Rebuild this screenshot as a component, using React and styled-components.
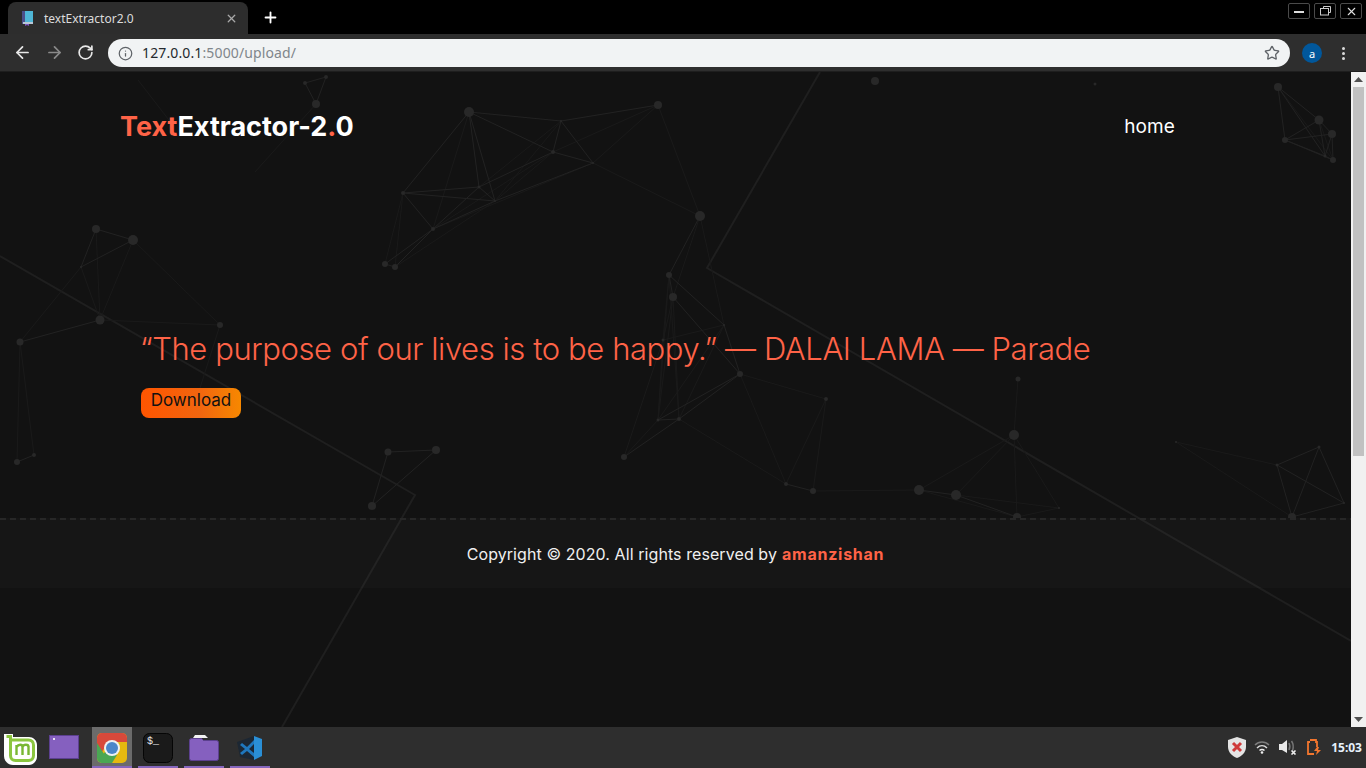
import React from 'react'
import styled, { createGlobalStyle } from 'styled-components'
import { ArrowLeft, ArrowRight, RotateCw, Info, Star, X, Plus } from 'lucide-react'

const GlobalStyle = createGlobalStyle`
  html, body { margin: 0; padding: 0; background: #000; overflow: hidden; }
  * { box-sizing: border-box; }
`

const Screen = styled.div`
  width: 1366px;
  height: 768px;
  display: flex;
  flex-direction: column;
  overflow: hidden;
  font-family: Inter, "Liberation Sans", sans-serif;
`

/* browser chrome */
const TabStrip = styled.div`
  height: 34px;
  flex: none;
  background: #000;
  display: flex;
  align-items: flex-end;
  padding-left: 8px;
`
const Tab = styled.div`
  width: 240px;
  height: 32px;
  background: #2d2d2d;
  border-radius: 8px 8px 0 0;
  display: flex;
  align-items: center;
  padding: 0 10px 0 14px;
  gap: 10px;
`
const TabTitle = styled.span`
  flex: 1;
  font-family: "Noto Sans", "Open Sans", sans-serif;
  font-size: 12px;
  color: #dcdcdc;
`
const NewTab = styled.div`
  margin: 0 0 5px 14px;
  height: 24px;
  display: flex;
  align-items: center;
  color: #fff;
`
const WindowButtons = styled.div`
  margin-left: auto;
  align-self: flex-start;
  display: flex;
  gap: 4px;
  padding: 3px 4px 0 0;
`
const WindowButton = styled.div`
  width: 22px;
  height: 16px;
  border: 1px solid #4a4a4a;
  border-radius: 2px;
  display: flex;
  align-items: center;
  justify-content: center;
`
const Toolbar = styled.div`
  height: 38px;
  flex: none;
  background: #2e2e2e;
  border-bottom: 1px solid #1e1e1e;
  display: flex;
  align-items: center;
  padding: 1px 12px 0 13px;
`
const NavIcon = styled.div`
  width: 32px;
  display: flex;
  margin-top: -1px;
  color: ${p => (p.$muted ? '#8a8a8a' : '#e8e8e8')};
`
const UrlBar = styled.div`
  margin-left: -1px;
  width: 1182px;
  height: 28px;
  border-radius: 14px;
  background: #f1f3f4;
  display: flex;
  align-items: center;
  padding: 0 10px;
  color: #5f6368;
`
const UrlText = styled.span`
  flex: 1;
  margin: -1px 0 0 9px;
  font-family: "Noto Sans", "Open Sans", sans-serif;
  font-size: 14px;
  letter-spacing: 0.13px;
  color: #80868b;
  b { font-weight: 400; color: #24292e; }
`
const Avatar = styled.div`
  width: 20px;
  height: 20px;
  margin-left: 12px;
  border-radius: 50%;
  background: #01579b;
  color: #fff;
  font-family: "Noto Sans", sans-serif;
  font-size: 11px;
  display: flex;
  align-items: center;
  justify-content: center;
`
const Dots = styled.div`
  margin-left: 20px;
  display: flex;
  flex-direction: column;
  gap: 2px;
  i { width: 3px; height: 3px; border-radius: 50%; background: #dadada; }
`

/* page */
const Viewport = styled.div`
  flex: 1;
  min-height: 0;
  display: flex;
`
const Page = styled.main`
  position: relative;
  flex: 1;
  background: #121212;
  overflow: hidden;
`
const Network = styled.svg`
  position: absolute;
  inset: 0;
  width: 1351px;
  height: 655px;
`
const Content = styled.div`
  position: relative;
  display: flex;
  flex-direction: column;
`
const Header = styled.header`
  height: 108px;
  padding: 0 176px 0 120px;
  display: flex;
  align-items: center;
  justify-content: space-between;
`
const Logo = styled.h1`
  margin: 0;
  font-size: 27px;
  line-height: 1;
  font-weight: 700;
  letter-spacing: 0;
  color: #fff;
  span { color: #ff6347; }
`
const HomeLink = styled.a`
  font-size: 19px;
  letter-spacing: 0.1px;
  color: #fff;
`
const Hero = styled.section`
  height: 338px;
  padding: 149px 0 0 140px;
`
const Quote = styled.p`
  margin: 0;
  font-size: 31px;
  line-height: 40px;
  font-weight: 300;
  letter-spacing: -0.42px;
  color: #ff6347;
`
const DownloadButton = styled.button`
  display: block;
  width: 100px;
  height: 30px;
  margin: 19px 0 0 1px;
  padding: 0 0 6px;
  border: 0;
  border-radius: 8px;
  background: linear-gradient(90deg, #ff5500 0%, #f1660f 60%, #f78800 100%);
  font-family: inherit;
  font-size: 17px;
  line-height: 24px;
  color: #111;
`
const Footer = styled.footer`
  position: relative;
  height: 70px;
  padding-top: 2px;
  background: rgba(255, 255, 255, 0.02);
  display: flex;
  align-items: center;
  justify-content: center;
  font-size: 16px;
  letter-spacing: 0.08px;
  color: #f0f0f0;
  &::before {
    content: "";
    position: absolute;
    top: 0;
    left: 0;
    right: 0;
    height: 2px;
    background: repeating-linear-gradient(90deg, #272727 0 6px, transparent 6px 10px);
  }
  b { margin-left: 5px; font-weight: 700; letter-spacing: 0.75px; color: #ff6347; }
`
const Scrollbar = styled.div`
  width: 15px;
  flex: none;
  background: #f1f1f1;
  display: flex;
  flex-direction: column;
  align-items: center;
`
const ScrollArrow = styled.div`
  height: 15px;
  flex: none;
  display: flex;
  align-items: center;
  color: #505050;
`
const ScrollThumb = styled.div`
  width: 11px;
  height: 369px;
  background: #c1c1c1;
`
const ScrollRest = styled.div`
  flex: 1;
`

/* desktop panel */
const Taskbar = styled.footer`
  height: 41px;
  flex: none;
  background: #2e2e2e;
  display: flex;
  align-items: stretch;
`
const MenuButton = styled.div`
  width: 40px;
  display: flex;
  align-items: center;
  justify-content: center;
  padding-top: 3px;
`
const LaunchItem = styled.div`
  width: 40px;
  margin-left: ${p => p.$gap || 6}px;
  display: flex;
  align-items: center;
  justify-content: center;
  padding-top: 2px;
  background: ${p => (p.$active ? '#6b6b6b' : 'transparent')};
  border-bottom: 2px solid ${p => (p.$open ? '#8566bd' : 'transparent')};
`
const Tray = styled.div`
  margin-left: auto;
  display: flex;
  align-items: center;
  padding-right: 4px;
`
const TrayIcon = styled.div`
  display: flex;
  margin-right: ${p => p.$gap}px;
`
const Clock = styled.span`
  font-family: "Noto Sans", "Open Sans", sans-serif;
  font-size: 12px;
  font-weight: 700;
  color: #e6f1fb;
`

const nodes = {
  a1: [469, 112, 5], a2: [561, 121, 1], a3: [658, 105, 4], a4: [553, 152, 2], a5: [593, 163, 1],
  a6: [403, 193, 2], a7: [479, 187, 1.5], a8: [495, 201, 1], a9: [433, 229, 2], a10: [385, 264, 3],
  a11: [395, 267, 3], a12: [700, 216, 5],
  b1: [96, 229, 4], b2: [133, 240, 5], b3: [81, 267, 1], b4: [100, 320, 4.5], b5: [20, 342, 3.5],
  b6: [220, 325, 3], b7: [34, 455, 2], b8: [17, 462, 3], b9: [200, 388, 0],
  c1: [388, 452, 3.5], c2: [436, 450, 4], c3: [372, 506, 4],
  d1: [669, 275, 3], d2: [673, 297, 4], d3: [724, 325, 1], d4: [663, 340, 1.5], d5: [740, 374, 3],
  d6: [826, 399, 2], d7: [658, 420, 1.5], d8: [679, 419, 2], d9: [624, 457, 3], d10: [786, 484, 2],
  d11: [813, 491, 3], d12: [919, 490, 5], d13: [956, 495, 5], d14: [1014, 435, 5], d15: [1018, 379, 2.5],
  d16: [1059, 508, 1], d17: [1017, 517, 4],
  e1: [1176, 442, 1], e2: [1277, 465, 1.5], e3: [1319, 447, 1.5], e4: [1344, 503, 1], e5: [1292, 517, 4],
  f1: [1278, 87, 4], f2: [1319, 120, 4.5], f3: [1332, 134, 4], f4: [1285, 140, 3], f5: [1325, 156, 1.5], f6: [1333, 160, 3],
  g1: [316, 104, 4], g2: [326, 77, 2], g3: [305, 83, 2], g4: [255, 172, 0], g5: [875, 81, 4], g6: [1095, 84, 1.5],
  g7: [138, 80, 0], g8: [172, 124, 0],
}

const strongEdges = `a1-a2 a1-a4 a1-a6 a1-a7 a1-a8 a2-a3 a2-a4 a2-a5 a4-a5 a4-a7 a5-a8
  a6-a7 a6-a8 a6-a9 a7-a8 a7-a9 a8-a9 a9-a10 a9-a11 a10-a11 a12-d1
  b1-b2 b1-b3 b2-b3 b4-b5 b7-b8 c1-c2 c1-c3 c2-c3 d1-d2 d1-d3 d2-d5 d3-d5
  d5-d8 d5-d7 d7-d8 d8-d9 d10-d11 d12-d13 d13-d17 e2-e3 e2-e4 e2-e5 e3-e4 e3-e5 e4-e5
  f1-f2 f1-f4 f1-f5 f2-f3 f2-f4 f2-f5 f3-f4 f3-f5 f3-f6 f4-f5 f4-f6 f5-f6 g1-g2 g1-g3 g2-g3`
const faintEdges = `a1-a9 a2-a7 a2-a8 a3-a4 a3-a5 a3-a12 a4-a8 a4-a9 a5-a9 a5-a12 a6-a10 a6-a11 a8-a11 a12-d2 a12-d3
  b1-b4 b2-b4 b3-b4 b3-b5 b2-b6 b4-b6 b5-b7 b5-b8 b6-b9 d1-d4 d1-d7 d1-d8 d2-d4 d2-d7 d2-d8 d3-d8 d3-d7 d3-d4
  d4-d7 d4-d9 d5-d6 d5-d10 d6-d10 d6-d11 d7-d9 d8-d10 d11-d12 d12-d14 d13-d14 d13-d16 d12-d17 d14-d15 d14-d16
  d14-d17 d16-d17 e1-e2 e1-e5 f1-f6 f2-f6 g1-g4 g7-g8`

const edgeList = str => str.trim().split(/\s+/).map(e => e.split('-'))

const NetworkBackground = () => (
  <Network viewBox="0 72 1351 655">
    <defs>
      <clipPath id="upper">
        <rect x="0" y="72" width="1351" height="446" />
      </clipPath>
    </defs>
    <g fill="none" stroke="#1f1f1f" strokeWidth="2">
      <polyline points="0,256 415,495 282,727" />
      <polyline points="820,72 707,268 1351,641" />
    </g>
    <g clipPath="url(#upper)">
      {edgeList(faintEdges).map(([a, b]) => (
        <line key={a + b} x1={nodes[a][0]} y1={nodes[a][1]} x2={nodes[b][0]} y2={nodes[b][1]} stroke="#1a1a1a" />
      ))}
      {edgeList(strongEdges).map(([a, b]) => (
        <line key={a + b} x1={nodes[a][0]} y1={nodes[a][1]} x2={nodes[b][0]} y2={nodes[b][1]} stroke="#222" />
      ))}
      {Object.keys(nodes).map(k => (
        <circle key={k} cx={nodes[k][0]} cy={nodes[k][1]} r={nodes[k][2]} fill="#282828" />
      ))}
    </g>
  </Network>
)

const Favicon = () => (
  <svg width="12" height="15" viewBox="0 0 12 15">
    <rect x="0" y="0" width="3" height="13" fill="#4b4f8a" />
    <rect x="3" y="0" width="8" height="11" fill="#4fb6d6" />
    <rect x="1" y="11" width="10" height="2" fill="#b9c7d6" />
    <path d="M3 13h4v2l-2-1-2 1z" fill="#7e57c2" />
  </svg>
)

const MintLogo = () => (
  <svg width="33" height="31" viewBox="0 0 33 31">
    <path d="M0 0h9v3h16c4 0 8 3 8 8v12c0 4-4 8-8 8H9c-5 0-9-4-9-9z" fill="#fff" />
    <path d="M2.500 2.500h4v19c0 3 2 5 5 5h13c3 0 5-2 5-5V11c0-3-2-5-5-5H7" fill="none" stroke="#8cc63f" strokeWidth="3" />
    <path d="M12.500 21V11M18.500 21V12M24.500 21V12M12.500 13c2-3 6-3 6 0c1-3 6-3 6 0" fill="none" stroke="#79b733" strokeWidth="2.400" />
  </svg>
)

const PurpleWindow = () => (
  <svg width="30" height="25" viewBox="0 0 30 25">
    <rect x="0.500" y="0.500" width="29" height="23" fill="#8560bf" stroke="#5c4090" />
    <rect x="4" y="3" width="2" height="2" fill="#e6e0f2" />
  </svg>
)

const ChromeLogo = () => (
  <svg width="30" height="30" viewBox="0 0 30 30">
    <rect x="0" y="0" width="30" height="30" rx="5" fill="#e6b90f" />
    <path d="M0 5a5 5 0 0 1 5-5h20a5 5 0 0 1 5 5v4H15a7 7 0 0 0-6 3.500L3 22H0z" fill="#d8493b" />
    <path d="M0 10l9 14 4 6H5a5 5 0 0 1-5-5z" fill="#4aa753" />
    <path d="M9 18l-7 8c1 3 2 4 4 4h9l5-8z" fill="#4aa753" />
    <circle cx="15" cy="15" r="8" fill="#eef0f2" />
    <circle cx="15" cy="15" r="6" fill="#4a86c9" />
  </svg>
)

const TerminalIcon = () => (
  <svg width="30" height="30" viewBox="0 0 30 30">
    <rect x="0.500" y="0.500" width="29" height="29" rx="6" fill="#1a1a1a" stroke="#050505" />
    <text x="4" y="11" fontFamily="Liberation Mono, monospace" fontSize="10" fill="#eee">$_</text>
  </svg>
)

const FolderIcon = () => (
  <svg width="30" height="26" viewBox="0 0 30 26">
    <path d="M4 3l2-3h10l3 3z" fill="#f2f2f2" />
    <path d="M0.500 5.500a2 2 0 0 1 2-2h10l2 2h13a2 2 0 0 1 2 2v16a2 2 0 0 1-2 2h-25a2 2 0 0 1-2-2z" fill="#8560bf" stroke="#5c4090" />
  </svg>
)

const VsCodeIcon = () => (
  <svg width="26" height="26" viewBox="0 0 26 26">
    <path d="M0 7l17-6 8 3v17l-8 4-14-3z" fill="#1c2733" />
    <path d="M17 1l8 3v17l-8 4z" fill="#2a8fd6" />
    <path d="M17 8v9l-6-4.500z" fill="#1c2733" />
    <path d="M17 5l-7 7-5-4-2 2 5 4-5 4 2 2 5-4 7 6v-4l-5-4 5-5z" fill="#1f77bd" />
  </svg>
)

const ShieldIcon = () => (
  <svg width="20" height="21" viewBox="0 0 20 21">
    <path d="M10 0l9 3v7c0 5-4 9-9 11-5-2-9-6-9-11V3z" fill="#e4e4e4" />
    <path d="M6 6l8 8M14 6l-8 8" stroke="#cf3a3a" strokeWidth="3" />
  </svg>
)

const WifiIcon = () => (
  <svg width="16" height="13" viewBox="0 0 16 13" fill="none">
    <path d="M1 4c4-4 10-4 14 0" stroke="#7d7d7d" strokeWidth="1.500" />
    <path d="M3 7c3-3 7-3 10 0" stroke="#dddddd" strokeWidth="1.500" />
    <path d="M5.500 9.500c1.500-1.500 3.500-1.500 5 0" stroke="#eeeeee" strokeWidth="1.500" />
    <circle cx="8" cy="11.500" r="1.300" fill="#eee" />
  </svg>
)

const VolumeIcon = () => (
  <svg width="18" height="15" viewBox="0 0 18 15" fill="none">
    <path d="M0 4h3l5-4v13l-5-3H0z" fill="#e8e8e8" />
    <path d="M10 3c1 2 1 5 0 7M12.500 1c2 3 2 7 1 10" stroke="#777" strokeWidth="1.500" />
    <path d="M12.500 10.500l4 4M16.500 10.500l-4 4" stroke="#eee" strokeWidth="1.600" />
  </svg>
)

const BatteryIcon = () => (
  <svg width="15" height="17" viewBox="0 0 15 17" fill="none">
    <path d="M3 1h6v2h1v5M7 15H1V3h2" stroke="#f2762e" strokeWidth="1.800" />
    <path d="M10 8l-3 4h3l-1 4 5-5h-3l1-3z" fill="#f2762e" />
  </svg>
)

const launchers = [
  { key: 'files', icon: <PurpleWindow />, gap: 4 },
  { key: 'chrome', icon: <ChromeLogo />, active: true, open: true, gap: 8 },
  { key: 'term', icon: <TerminalIcon />, open: true },
  { key: 'folder', icon: <FolderIcon />, open: true },
  { key: 'code', icon: <VsCodeIcon />, open: true },
]

export default function App() {
  return (
    <Screen>
      <GlobalStyle />
      <TabStrip>
        <Tab>
          <Favicon />
          <TabTitle>textExtractor2.0</TabTitle>
          <X size={13} color="#a8a8a8" strokeWidth={2.400} />
        </Tab>
        <NewTab>
          <Plus size={17} strokeWidth={2.600} />
        </NewTab>
        <WindowButtons>
          <WindowButton>
            <svg width="10" height="8" viewBox="0 0 10 8"><rect y="4" width="10" height="2" fill="#ddd" /></svg>
          </WindowButton>
          <WindowButton>
            <svg width="11" height="10" viewBox="0 0 11 10" fill="none" stroke="#ccc"><path d="M3.500 2.500v-2h7v6h-2" /><rect x="0.500" y="2.500" width="8" height="6.500" /></svg>
          </WindowButton>
          <WindowButton>
            <X size={13} color="#e0e0e0" strokeWidth={2} />
          </WindowButton>
        </WindowButtons>
      </TabStrip>
      <Toolbar>
        <NavIcon><ArrowLeft size={19} strokeWidth={2.200} /></NavIcon>
        <NavIcon $muted><ArrowRight size={19} strokeWidth={2.200} /></NavIcon>
        <NavIcon><RotateCw size={17} strokeWidth={2.400} /></NavIcon>
        <UrlBar>
          <Info size={15} strokeWidth={2} />
          <UrlText><b>127.0.0.1</b>:5000/upload/</UrlText>
          <Star size={16} strokeWidth={2} />
        </UrlBar>
        <Avatar>a</Avatar>
        <Dots><i /><i /><i /></Dots>
      </Toolbar>
      <Viewport>
        <Page>
          <NetworkBackground />
          <Content>
            <Header>
              <Logo><span>Text</span>Extractor-2<span>.</span>0</Logo>
              <HomeLink>home</HomeLink>
            </Header>
            <Hero>
              <Quote>“The purpose of our lives is to be happy.” — DALAI LAMA — Parade</Quote>
              <DownloadButton>Download</DownloadButton>
            </Hero>
            <Footer>
              Copyright © 2020. All rights reserved by <b>amanzishan</b>
            </Footer>
          </Content>
        </Page>
        <Scrollbar>
          <ScrollArrow>
            <svg width="9" height="5" viewBox="0 0 9 5"><path d="M4.500 0L9 5H0z" fill="currentColor" /></svg>
          </ScrollArrow>
          <ScrollThumb />
          <ScrollRest />
          <ScrollArrow>
            <svg width="9" height="5" viewBox="0 0 9 5"><path d="M0 0h9L4.500 5z" fill="currentColor" /></svg>
          </ScrollArrow>
        </Scrollbar>
      </Viewport>
      <Taskbar>
        <MenuButton><MintLogo /></MenuButton>
        {launchers.map(l => (
          <LaunchItem key={l.key} $active={l.active} $open={l.open} $gap={l.gap}>{l.icon}</LaunchItem>
        ))}
        <Tray>
          <TrayIcon $gap={7}><ShieldIcon /></TrayIcon>
          <TrayIcon $gap={9}><WifiIcon /></TrayIcon>
          <TrayIcon $gap={10}><VolumeIcon /></TrayIcon>
          <TrayIcon $gap={9}><BatteryIcon /></TrayIcon>
          <Clock>15:03</Clock>
        </Tray>
      </Taskbar>
    </Screen>
  )
}
